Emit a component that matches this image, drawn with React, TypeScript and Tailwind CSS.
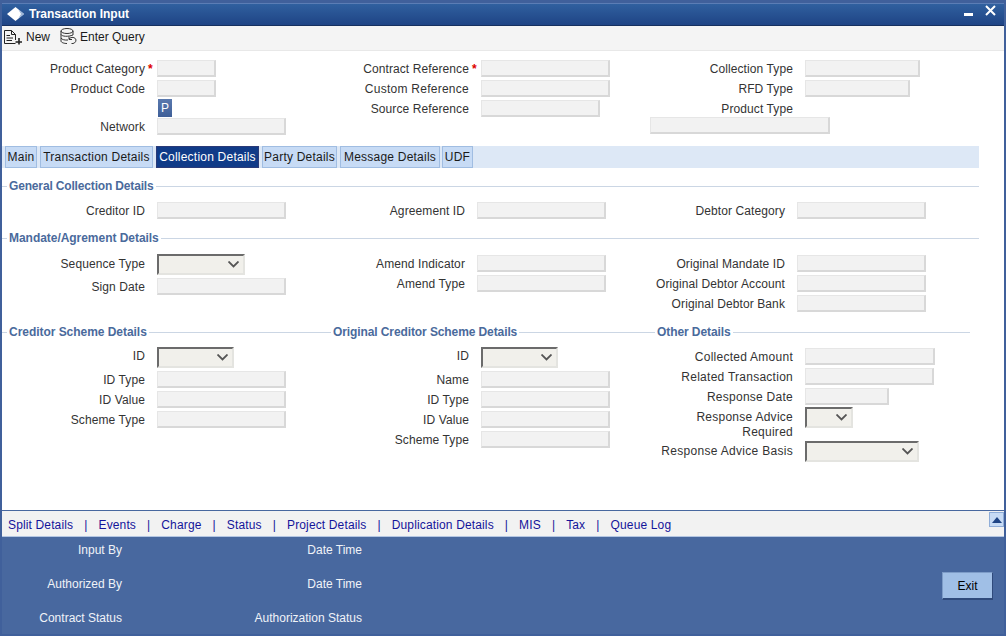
import React from "react";

const Input = ({ w }: { w: string }) => (
  <div className={`${w} h-[17px] bg-[#f2f2f2] border border-[#e6e6e6] border-r-[#d8d8d8] border-b-[#d8d8d8] border-b-2 border-r-2 shrink-0`} />
);

const Select = ({ w }: { w: string }) => (
  <div className={`${w} h-[21px] bg-[#f1f0eb] border-t-2 border-l-2 border-t-[#6b6b6b] border-l-[#6b6b6b] border-r-2 border-b-2 border-r-[#e4e4e0] border-b-[#e4e4e0] shrink-0 flex items-center justify-end pr-[4px]`}>
    <svg width="11" height="7" viewBox="0 0 11 7"><path d="M0.5 0.5 L5.5 5.5 L10.5 0.5" fill="none" stroke="#555" strokeWidth="1.8" /></svg>
  </div>
);

const Row = ({ label, lw, star, h = "h-5", children }: { label: React.ReactNode; lw: string; star?: boolean; h?: string; children: React.ReactNode }) => (
  <div className={`flex items-start shrink-0 ${h}`}>
    <div className={`${lw} text-right text-[#333] leading-[18px] shrink-0 tracking-[0.1px]`}>{label}</div>
    <div className="w-3 shrink-0 text-[#d00] font-bold leading-[18px] pl-[3px]">{star ? "*" : ""}</div>
    {children}
  </div>
);

const Legend = ({ text, tr }: { text: string; tr: string }) => (
  <div className="flex items-center h-4 gap-[2px] shrink-0">
    <div className="w-[5px] h-px bg-[#cbd6e4]" />
    <span className={`font-bold text-[#4a6a9c] whitespace-nowrap ${tr}`}>{text}</span>
    <div className="flex-1 h-px bg-[#cbd6e4]" />
  </div>
);

const Tab = ({ t, active, w }: { t: string; active?: boolean; w: string }) => (
  <div className={`${w} h-[22px] flex items-center justify-center border shrink-0 tracking-[0.22px] ${active ? "bg-[#103b88] border-[#2a3a78] text-white" : "bg-[#c7dbf5] border-[#a0bde2] text-[#1a1a1a]"}`}>{t}</div>
);

const Wide = ({ children }: { children: React.ReactNode }) => <span className="tracking-[0.26px]">{children}</span>;

const links = ["Split Details", "Events", "Charge", "Status", "Project Details", "Duplication Details", "MIS", "Tax", "Queue Log"];

export default function App() {
  return (
    <div className="w-[1006px] h-[636px] flex flex-col overflow-hidden bg-white border-x-2 border-b-2 border-[#40609b] text-[12px] [font-family:'Liberation_Sans',Arial,sans-serif]">
      {/* title */}
      <div className="h-[26px] shrink-0 -mx-[2px] pt-[3px] bg-[#40609b]">
        <div className="h-[23px] border-t border-[#5b7db5] border-b border-b-[#16305f] bg-gradient-to-b from-[#30609f] to-[#1f4485] flex items-center pl-[7px] pr-[10px] pb-[2px] text-white">
          <svg width="17" height="14" viewBox="0 0 17 14" className="shrink-0">
            <path d="M8.5 0 L17 7 L8.5 14 L0 7 Z" fill="#fff" />
            <path d="M11 2 L17 7 L11 12 L14 7 Z" fill="#9db6d8" />
          </svg>
          <span className="font-bold ml-[5px] text-[12px] flex-1">Transaction Input</span>
          <div className="w-[9px] h-[3px] bg-white mr-[12px] mt-[2px]" />
          <svg width="11" height="11" viewBox="0 0 11 11" className="mb-[6px]"><path d="M1 1 L10 10 M10 1 L1 10" stroke="#fff" strokeWidth="2" /></svg>
        </div>
      </div>
      {/* toolbar */}
      <div className="h-[25px] shrink-0 bg-[#f4f4f4] border-b border-[#e8e8e8] flex items-center pl-[2px] pb-[3px] text-[#1a1a1a]">
        <svg width="18" height="16" viewBox="0 0 18 16" className="shrink-0">
          <path d="M0.5 1.5 H7.5 L11.5 5.5 V11 M11.5 14.5 H0.5 V1.5 M7.5 1.5 V5.5 H11.5" fill="none" stroke="#222" />
          <path d="M2.5 6.5 H6 M2.5 9 H9 M2.5 11.5 H8" stroke="#222" />
          <path d="M15 9 V15.5 M11.5 13 H18" stroke="#222" strokeWidth="1.6" />
        </svg>
        <span className="ml-[4px]">New</span>
        <svg width="17" height="17" viewBox="0 0 17 17" className="ml-[10px] shrink-0">
          <ellipse cx="7" cy="3" rx="6" ry="2.5" fill="none" stroke="#333" />
          <path d="M1 3 V13 C1 14.5 4 15.5 7 15.5 M13 3 V7 M1 6.5 C2 8.5 8 9 13 7 M1 10 C2 11.8 5 12.3 8 12" fill="none" stroke="#333" />
          <path d="M9 11 C11 8.5 15.5 9 16 12 C16 14.5 13.5 16 11.5 15.5 M9 8.5 V11.5 H12" fill="none" stroke="#333" />
        </svg>
        <span className="ml-[3px]">Enter Query</span>
      </div>
      {/* header form */}
      <div className="h-[95px] shrink-0 pt-[9px] flex">
        <div className="w-[324px] shrink-0">
          <Row label="Product Category" lw="w-[143px]" star><Input w="w-[59px]" /></Row>
          <Row label="Product Code" lw="w-[143px]"><Input w="w-[59px]" /></Row>
          <div className="h-[19px] pl-[156px]">
            <div className="w-[14px] h-[18px] -mt-px bg-gradient-to-b from-[#5a79ae] to-[#3f5f98] text-white text-center leading-[18px]">P</div>
          </div>
          <Row label="Network" lw="w-[143px]"><Input w="w-[129px]" /></Row>
        </div>
        <div className="w-[324px] shrink-0">
          <Row label="Contract Reference" lw="w-[143px]" star><Input w="w-[129px]" /></Row>
          <Row label={<Wide>Custom Reference</Wide>} lw="w-[143px]"><Input w="w-[129px]" /></Row>
          <Row label="Source Reference" lw="w-[143px]"><Input w="w-[119px]" /></Row>
        </div>
        <div className="flex-1">
          <Row label="Collection Type" lw="w-[143px]"><Input w="w-[115px]" /></Row>
          <Row label="RFD Type" lw="w-[143px]"><Input w="w-[105px]" /></Row>
          <Row label="Product Type" lw="w-[143px]" h="h-[17px]"><div /></Row>
          <Input w="w-[180px]" />
        </div>
      </div>
      {/* tabs */}
      <div className="h-[22px] w-[977px] shrink-0 bg-[#dde8f6] flex gap-[3px] pl-[3px]">
        <Tab t="Main" w="w-[32px]" />
        <Tab t="Transaction Details" w="w-[113px]" />
        <Tab t="Collection Details" w="w-[103px]" active />
        <Tab t="Party Details" w="w-[75px]" />
        <div className="flex gap-[2px]">
          <Tab t="Message Details" w="w-[100px]" />
          <Tab t="UDF" w="w-[31px]" />
        </div>
      </div>
      {/* body */}
      <div className="flex-1 min-h-0 flex flex-col">
        <div className="h-[34px] shrink-0 w-[977px] flex flex-col justify-end pb-[8px]"><Legend text="General Collection Details" tr="tracking-[-0.16px]" /></div>
        <div className="flex h-[20px] shrink-0">
          <div className="w-[320px] shrink-0"><Row label="Creditor ID" lw="w-[143px]"><Input w="w-[129px]" /></Row></div>
          <div className="w-[320px] shrink-0"><Row label="Agreement ID" lw="w-[143px]"><Input w="w-[129px]" /></Row></div>
          <div><Row label="Debtor Category" lw="w-[143px]"><Input w="w-[129px]" /></Row></div>
        </div>
        <div className="h-[32px] shrink-0 w-[977px] flex flex-col justify-end pb-[8px]"><Legend text="Mandate/Agrement Details" tr="tracking-[-0.04px]" /></div>
        <div className="flex h-[70px] shrink-0">
          <div className="w-[320px] shrink-0">
            <Row label={<span className="relative top-[1px]">Sequence Type</span>} lw="w-[143px]" h="h-[24px]"><Select w="w-[88px]" /></Row>
            <Row label="Sign Date" lw="w-[143px]"><Input w="w-[129px]" /></Row>
          </div>
          <div className="w-[320px] shrink-0 pt-px">
            <Row label="Amend Indicator" lw="w-[143px]"><Input w="w-[129px]" /></Row>
            <Row label="Amend Type" lw="w-[143px]"><Input w="w-[129px]" /></Row>
          </div>
          <div className="pt-px">
            <Row label="Original Mandate ID" lw="w-[143px]"><Input w="w-[129px]" /></Row>
            <Row label="Original Debtor Account" lw="w-[143px]"><Input w="w-[129px]" /></Row>
            <Row label="Original Debtor Bank" lw="w-[143px]"><Input w="w-[129px]" /></Row>
          </div>
        </div>
        <div className="flex shrink-0">
          <div className="w-[324px] shrink-0">
            <Legend text="Creditor Scheme Details" tr="tracking-[-0.04px]" />
            <div className="pt-[7px]">
              <Row label="ID" lw="w-[143px]" h="h-[24px]"><Select w="w-[77px]" /></Row>
              <Row label="ID Type" lw="w-[143px]"><Input w="w-[129px]" /></Row>
              <Row label="ID Value" lw="w-[143px]"><Input w="w-[129px]" /></Row>
              <Row label="Scheme Type" lw="w-[143px]"><Input w="w-[129px]" /></Row>
            </div>
          </div>
          <div className="w-[324px] shrink-0">
            <Legend text="Original Creditor Scheme Details" tr="tracking-[-0.1px]" />
            <div className="pt-[7px]">
              <Row label="ID" lw="w-[143px]" h="h-[24px]"><Select w="w-[77px]" /></Row>
              <Row label="Name" lw="w-[143px]"><Input w="w-[129px]" /></Row>
              <Row label="ID Type" lw="w-[143px]"><Input w="w-[129px]" /></Row>
              <Row label="ID Value" lw="w-[143px]"><Input w="w-[129px]" /></Row>
              <Row label="Scheme Type" lw="w-[143px]"><Input w="w-[129px]" /></Row>
            </div>
          </div>
          <div className="w-[320px] shrink-0">
            <Legend text="Other Details" tr="tracking-[-0.08px]" />
            <div className="pt-[8px]">
              <Row label={<Wide>Collected Amount</Wide>} lw="w-[143px]"><Input w="w-[130px]" /></Row>
              <Row label={<Wide>Related Transaction</Wide>} lw="w-[143px]"><Input w="w-[129px]" /></Row>
              <Row label={<Wide>Response Date</Wide>} lw="w-[143px]" h="h-[19px]"><Input w="w-[84px]" /></Row>
              <Row label={<span className="block leading-[15px] pt-[3px] tracking-[0.26px]">Response Advice Required</span>} lw="w-[143px]" h="h-[34px]"><Select w="w-[48px]" /></Row>
              <Row label={<span className="relative top-[1px] whitespace-nowrap tracking-[0.3px]">Response Advice Basis</span>} lw="w-[143px]"><Select w="w-[114px]" /></Row>
            </div>
          </div>
        </div>
      </div>
      {/* links */}
      <div className="h-[27px] shrink-0 bg-[#f2f2f2] border-t border-t-[#48689f] border-b border-b-[#b4c6e2] flex items-center pl-[6px] pt-[2px] text-[#14149a] tracking-[0.14px]">
        {links.map((l, i) => (
          <React.Fragment key={l}>
            {i > 0 && <span className="w-[25.3px] text-center">|</span>}
            <span>{l}</span>
          </React.Fragment>
        ))}
        <div className="ml-auto self-start -mt-px w-[15px] h-[15px] bg-[#c7dbf5] border border-[#8fadd8] flex items-center justify-center">
          <div className="w-0 h-0 border-x-[5px] border-x-transparent border-b-[6px] border-b-[#1f4485]" />
        </div>
      </div>
      {/* footer */}
      <div className="h-[97px] shrink-0 bg-[#48689f] text-[#f0f3f8] flex">
        <div className="w-[120px] shrink-0 text-right pt-[6px] flex flex-col gap-[20px] leading-[14px]">
          <div>Input By</div>
          <div>Authorized By</div>
          <div>Contract Status</div>
        </div>
        <div className="w-[240px] shrink-0 text-right pt-[6px] flex flex-col gap-[20px] leading-[14px]">
          <div>Date Time</div>
          <div>Date Time</div>
          <div>Authorization Status</div>
        </div>
        <div className="flex-1 flex justify-end items-start pr-[11px] pt-[35px]">
          <div className="w-[51px] h-[28px] bg-[#a0bfe6] border border-[#7d9cc8] border-r-[#2f4a7c] border-b-2 border-b-[#2f4a7c] text-black flex items-center justify-center">Exit</div>
        </div>
      </div>
    </div>
  );
}
